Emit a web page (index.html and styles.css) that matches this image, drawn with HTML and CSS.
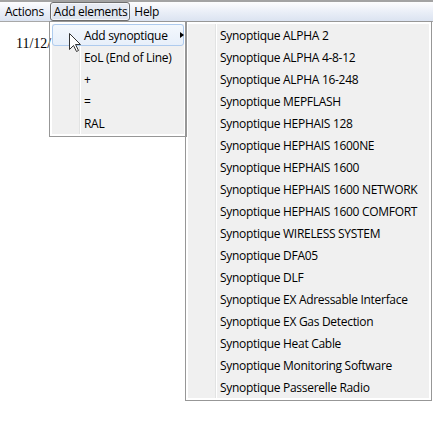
FILE: index.html
```html
<!DOCTYPE html>
<html>
<head>
<meta charset="utf-8">
<link rel="stylesheet" href="styles.css">
</head>
<body>
<div class="window">
  <div class="menubar">
    <span class="mb-item">Actions</span>
    <span class="mb-item open">Add elements</span>
    <span class="mb-item">Help</span>
  </div>
  <div class="content">
    <div class="date">11/12/</div>
  </div>

  <div class="menu main-menu">
    <div class="item hover">Add synoptique<span class="arrow"></span></div>
    <div class="item">EoL (End of Line)</div>
    <div class="item">+</div>
    <div class="item">=</div>
    <div class="item">RAL</div>
  </div>

  <div class="menu sub-menu">
    <div class="item">Synoptique ALPHA 2</div>
    <div class="item">Synoptique ALPHA 4-8-12</div>
    <div class="item">Synoptique ALPHA 16-248</div>
    <div class="item">Synoptique MEPFLASH</div>
    <div class="item">Synoptique HEPHAIS 128</div>
    <div class="item">Synoptique HEPHAIS 1600NE</div>
    <div class="item">Synoptique HEPHAIS 1600</div>
    <div class="item">Synoptique HEPHAIS 1600 NETWORK</div>
    <div class="item">Synoptique HEPHAIS 1600 COMFORT</div>
    <div class="item">Synoptique WIRELESS SYSTEM</div>
    <div class="item">Synoptique DFA05</div>
    <div class="item">Synoptique DLF</div>
    <div class="item">Synoptique EX Adressable Interface</div>
    <div class="item">Synoptique EX Gas Detection</div>
    <div class="item">Synoptique Heat Cable</div>
    <div class="item">Synoptique Monitoring Software</div>
    <div class="item">Synoptique Passerelle Radio</div>
  </div>

  <svg class="cursor" width="13" height="20" viewBox="0 0 13 20">
    <path d="M0.5 0.5 L0.5 16.5 L4.5 12.5 L7.5 18.5 L9.5 17.5 L6.5 11.5 L11.5 11.5 Z" fill="#fff" stroke="#333" stroke-width="1" stroke-linejoin="miter"/>
  </svg>
</div>
</body>
</html>
```

FILE: styles.css
```css
html, body {
  margin: 0;
  padding: 0;
  background: #fff;
}
.window {
  position: relative;
  width: 433px;
  height: 425px;
  overflow: hidden;
  font-family: "Open Sans", "Noto Sans", sans-serif;
  font-size: 12px;
  letter-spacing: -0.3px;
  color: #000;
}
.menubar {
  display: flex;
  align-items: center;
  height: 19px;
  padding-left: 1px;
  border-top: 2px solid #a3a3a3;
  border-bottom: 1px solid #a8a8a8;
  background: linear-gradient(#fdfdfe, #e9eef7 55%, #dbe3f1);
}
.mb-item {
  display: flex;
  align-items: center;
  height: 17px;
  padding: 0 2px 0 3px;
  margin-right: 3px;
  border: 1px solid transparent;
  border-radius: 3px;
  line-height: 17px;
}
.mb-item.open {
  margin-right: 0;
  border-color: #6e6e6e;
  background: linear-gradient(#e8ecf3, #dde3ee);
  box-shadow: inset 0 0 0 1px rgba(255,255,255,0.6);
}
.content {
  padding: 14px 16px;
}
.date {
  font-family: "Liberation Serif", serif;
  font-size: 14px;
  line-height: 16px;
  letter-spacing: 0;
}
.menu {
  position: absolute;
  top: 21px;
  box-sizing: border-box;
  padding: 2px;
  border: 1px solid #979797;
  background-color: #f0f0f0;
  background-image: linear-gradient(to right,
    transparent 27px, #e2e3e3 27px, #e2e3e3 28px,
    #ffffff 28px, #ffffff 29px, transparent 29px);
  background-origin: content-box;
  background-clip: content-box;
}
.main-menu {
  left: 49px;
  width: 138px;
}
.sub-menu {
  left: 185px;
  width: 247px;
}
.item {
  position: relative;
  height: 22px;
  line-height: 22px;
  padding-left: 31px;
  box-sizing: border-box;
  border: 1px solid transparent;
  border-radius: 3px;
  white-space: nowrap;
}
.item.hover {
  border-color: #aecbee;
  background: linear-gradient(#f4f8fd, #e7effa);
}
.arrow {
  position: absolute;
  right: -1px;
  top: 7px;
  width: 0;
  height: 0;
  border-top: 3.5px solid transparent;
  border-bottom: 3.5px solid transparent;
  border-left: 4px solid #000;
}
.cursor {
  position: absolute;
  left: 69px;
  top: 33px;
}
```
